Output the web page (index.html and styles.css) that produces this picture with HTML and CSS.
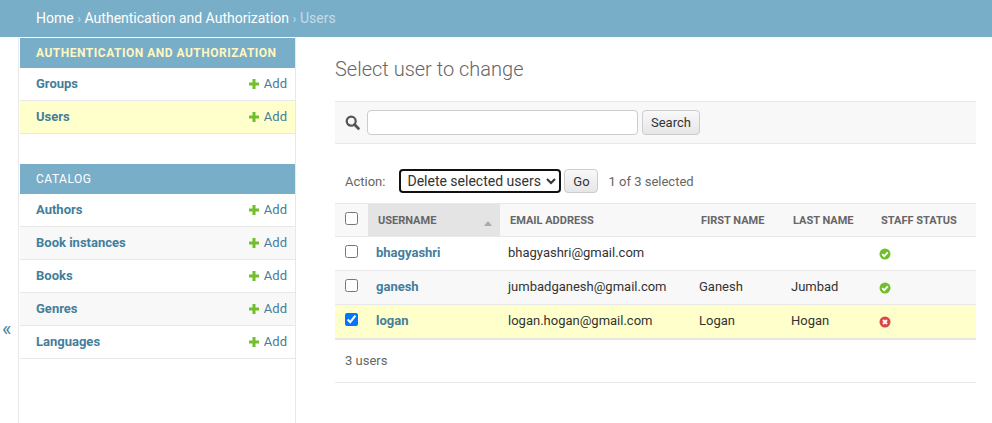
FILE: index.html
```html
<!DOCTYPE html>
<html lang="en">
<head>
  <meta charset="UTF-8">
  <title>Select user to change</title>
  <link rel="stylesheet" href="styles.css">
</head>
<body>
  <div class="breadcrumbs">
    <a href="#">Home</a> <span class="sep">›</span> <a href="#">Authentication and Authorization</a> <span class="sep">›</span> Users
  </div>

  <div class="main">
    <div class="toggle"><span class="toggle-glyph">«</span></div>

    <nav class="sidebar">
      <table class="app-list">
        <caption class="current-app">Authentication and Authorization</caption>
        <tr><th>Groups</th><td><a class="addlink" href="#"><svg class="plus" viewBox="0 0 12 12"><path d="M4.5 1h3v3.5H11v3H7.5V11h-3V7.5H1v-3h3.5z"/></svg>Add</a></td></tr>
        <tr class="current"><th>Users</th><td><a class="addlink" href="#"><svg class="plus" viewBox="0 0 12 12"><path d="M4.5 1h3v3.5H11v3H7.5V11h-3V7.5H1v-3h3.5z"/></svg>Add</a></td></tr>
      </table>
      <table class="app-list">
        <caption>Catalog</caption>
        <tr><th>Authors</th><td><a class="addlink" href="#"><svg class="plus" viewBox="0 0 12 12"><path d="M4.5 1h3v3.5H11v3H7.5V11h-3V7.5H1v-3h3.5z"/></svg>Add</a></td></tr>
        <tr class="alt"><th>Book instances</th><td><a class="addlink" href="#"><svg class="plus" viewBox="0 0 12 12"><path d="M4.5 1h3v3.5H11v3H7.5V11h-3V7.5H1v-3h3.5z"/></svg>Add</a></td></tr>
        <tr><th>Books</th><td><a class="addlink" href="#"><svg class="plus" viewBox="0 0 12 12"><path d="M4.5 1h3v3.5H11v3H7.5V11h-3V7.5H1v-3h3.5z"/></svg>Add</a></td></tr>
        <tr class="alt"><th>Genres</th><td><a class="addlink" href="#"><svg class="plus" viewBox="0 0 12 12"><path d="M4.5 1h3v3.5H11v3H7.5V11h-3V7.5H1v-3h3.5z"/></svg>Add</a></td></tr>
        <tr><th>Languages</th><td><a class="addlink" href="#"><svg class="plus" viewBox="0 0 12 12"><path d="M4.5 1h3v3.5H11v3H7.5V11h-3V7.5H1v-3h3.5z"/></svg>Add</a></td></tr>
      </table>
    </nav>

    <div class="content">
      <h1>Select user to change</h1>

      <div class="toolbar">
        <svg class="search-icon" viewBox="0 0 15 15"><circle cx="6.2" cy="6.2" r="4.5" fill="none" stroke="#555" stroke-width="2.2"/><path d="M9.6 9.6l3.8 3.8" stroke="#555" stroke-width="2.8" stroke-linecap="round"/></svg>
        <input class="search-box" type="text">
        <button class="btn">Search</button>
      </div>

      <div class="actions">
        <label>Action:</label>
        <select class="action-select">
          <option>Delete selected users</option>
        </select>
        <button class="btn go">Go</button>
        <span class="count">1 of 3 selected</span>
      </div>

      <table class="results">
        <thead>
          <tr>
            <th class="col-check"><input type="checkbox"></th>
            <th class="col-user sorted">Username<span class="sort-arrow"></span></th>
            <th class="col-email">Email address</th>
            <th class="col-first">First name</th>
            <th class="col-last">Last name</th>
            <th class="col-staff">Staff status</th>
          </tr>
        </thead>
        <tbody>
          <tr>
            <td class="col-check"><input type="checkbox"></td>
            <td><a class="user-link" href="#">bhagyashri</a></td>
            <td>bhagyashri@gmail.com</td>
            <td></td>
            <td></td>
            <td><svg class="status" viewBox="0 0 12 12"><circle cx="6" cy="6" r="5.5" fill="#70bf2b"/><path d="M3.2 6.2l2 2 3.6-3.8" fill="none" stroke="#fff" stroke-width="1.8"/></svg></td>
          </tr>
          <tr class="alt">
            <td class="col-check"><input type="checkbox"></td>
            <td><a class="user-link" href="#">ganesh</a></td>
            <td>jumbadganesh@gmail.com</td>
            <td>Ganesh</td>
            <td>Jumbad</td>
            <td><svg class="status" viewBox="0 0 12 12"><circle cx="6" cy="6" r="5.5" fill="#70bf2b"/><path d="M3.2 6.2l2 2 3.6-3.8" fill="none" stroke="#fff" stroke-width="1.8"/></svg></td>
          </tr>
          <tr class="selected">
            <td class="col-check"><input type="checkbox" checked></td>
            <td><a class="user-link" href="#">logan</a></td>
            <td>logan.hogan@gmail.com</td>
            <td>Logan</td>
            <td>Hogan</td>
            <td><svg class="status" viewBox="0 0 12 12"><circle cx="6" cy="6" r="5.5" fill="#dd4646"/><path d="M4 4l4 4M8 4l-4 4" fill="none" stroke="#fff" stroke-width="1.9"/></svg></td>
          </tr>
        </tbody>
      </table>

      <p class="paginator">3 users</p>
    </div>
  </div>
</body>
</html>
```

FILE: styles.css
```css
* {
  box-sizing: border-box;
}
html, body {
  height: 423px;
  overflow: hidden;
}
body {
  margin: 0;
  font-family: Roboto, "Liberation Sans", sans-serif;
  font-size: 14px;
  color: #333;
  background: #fff;
}
a {
  text-decoration: none;
}

.breadcrumbs {
  height: 37px;
  padding: 10px 36px;
  background: #79aec8;
  color: #c4dce8;
  font-size: 14px;
  line-height: 17px;
}
.breadcrumbs a {
  color: #fff;
}
.sep {
  font-size: 13px;
}

.main {
  display: flex;
  height: 386px;
}
.toggle {
  width: 19px;
  flex: none;
  padding: 282px 0 0 2px;
  border-right: 1px solid #e8e8e8;
}
.toggle-glyph {
  color: #447e9b;
  font-size: 20px;
  line-height: 20px;
}
.sidebar {
  width: 277px;
  flex: none;
  border-right: 1px solid #e8e8e8;
  padding: 1px 0 0 1px;
}

.app-list {
  width: 100%;
  border-spacing: 0;
  margin-bottom: 30px;
  font-size: 13px;
}
.app-list caption {
  height: 30px;
  padding: 0 16px;
  background: #79aec8;
  color: #fff;
  font-size: 12px;
  line-height: 30px;
  text-align: left;
  text-transform: uppercase;
  letter-spacing: 0.5px;
  white-space: nowrap;
}
.app-list caption.current-app {
  color: #fff7c0;
  font-weight: 700;
}
.app-list tr {
  height: 33px;
}
.app-list th {
  padding: 0 0 1px 16px;
  text-align: left;
  font-weight: 700;
  color: #447e9b;
  border-bottom: 1px solid #e8e8e8;
}
.app-list td {
  padding: 0 8px 1px 0;
  text-align: right;
  border-bottom: 1px solid #e8e8e8;
}
.app-list tr.alt {
  background: #f8f8f8;
}
.app-list tr.current {
  background: #ffc;
}
.addlink {
  color: #447e9b;
}
.plus {
  width: 12px;
  height: 12px;
  fill: #70bf2b;
  margin-right: 4px;
  vertical-align: -1.5px;
}

.content {
  flex: 1;
  padding: 20px 16px 0 39px;
  min-width: 0;
}
h1 {
  margin: 0 0 20px;
  font-size: 20px;
  font-weight: 300;
  line-height: 24px;
  color: #666;
}

.toolbar {
  display: flex;
  align-items: center;
  height: 43px;
  padding-left: 10px;
  background: #f8f8f8;
  border-top: 1px solid #e8e8e8;
  border-bottom: 1px solid #e8e8e8;
  margin-bottom: 25px;
}
.search-icon {
  width: 15px;
  height: 15px;
  margin-right: 7px;
}
.search-box {
  width: 271px;
  height: 25px;
  margin-right: 4px;
  padding: 2px 5px;
  background: #fff;
  border: 1px solid #ccc;
  border-radius: 4px;
}
.btn {
  height: 25px;
  padding: 0 8px;
  font-family: inherit;
  font-size: 13px;
  color: #333;
  background: linear-gradient(#f9f9f9, #e6e6e6);
  border: 1px solid #ccc;
  border-radius: 4px;
}

.actions {
  display: flex;
  align-items: center;
  height: 24px;
  margin-bottom: 10px;
  padding-left: 10px;
  font-size: 13px;
  color: #666;
}
.actions label {
  margin-right: 14px;
}
.action-select {
  width: 162px;
  height: 24px;
  margin-right: 3px;
  padding: 0 2px 1px;
  font-family: inherit;
  font-size: 14px;
  color: #333;
  background: #fff;
  border: 2px solid #111;
  border-radius: 4px;
}
.go {
  width: 34px;
  height: 24px;
  padding: 0;
}
.count {
  margin-left: 10px;
  color: #666;
}

.results {
  width: 641px;
  table-layout: fixed;
  border-spacing: 0;
  font-size: 13px;
  border-bottom: 1px solid #e5e5e5;
}
.results th {
  height: 34px;
  padding: 0 0 0 10px;
  text-align: left;
  font-size: 11px;
  font-weight: 700;
  text-transform: uppercase;
  color: #666;
  background: #f8f8f8;
  border-top: 1px solid #e8e8e8;
  border-bottom: 1px solid #e8e8e8;
}
.results th.sorted {
  position: relative;
  background: #e4e4e4;
}
.sort-arrow {
  position: absolute;
  right: 8px;
  top: 17px;
  border-left: 4px solid transparent;
  border-right: 4px solid transparent;
  border-bottom: 5px solid #aaa;
}
.results td {
  height: 34px;
  padding: 0 0 3px 8px;
  color: #333;
  border-bottom: 1px solid #e8e8e8;
}
.results tbody tr.alt {
  background: #f8f8f8;
}
.results tbody tr.selected {
  background: #ffc;
}
.results input[type="checkbox"] {
  display: block;
  margin: 0 0 1px 10px;
}
.results th input[type="checkbox"] {
  margin-bottom: 3px;
}
.results .col-check {
  width: 33px;
  padding-left: 0;
}
.col-user {
  width: 132px;
}
.col-email {
  width: 191px;
}
.col-first {
  width: 92px;
}
.col-last {
  width: 88px;
}
.user-link {
  font-weight: 700;
  color: #447e9b;
}
.status {
  display: block;
  width: 12px;
  height: 12px;
  margin-top: 3px;
}

.paginator {
  height: 43px;
  margin: 0;
  padding: 13px 10px;
  font-size: 13px;
  line-height: 15px;
  color: #666;
  border-bottom: 1px solid #e8e8e8;
}
```
